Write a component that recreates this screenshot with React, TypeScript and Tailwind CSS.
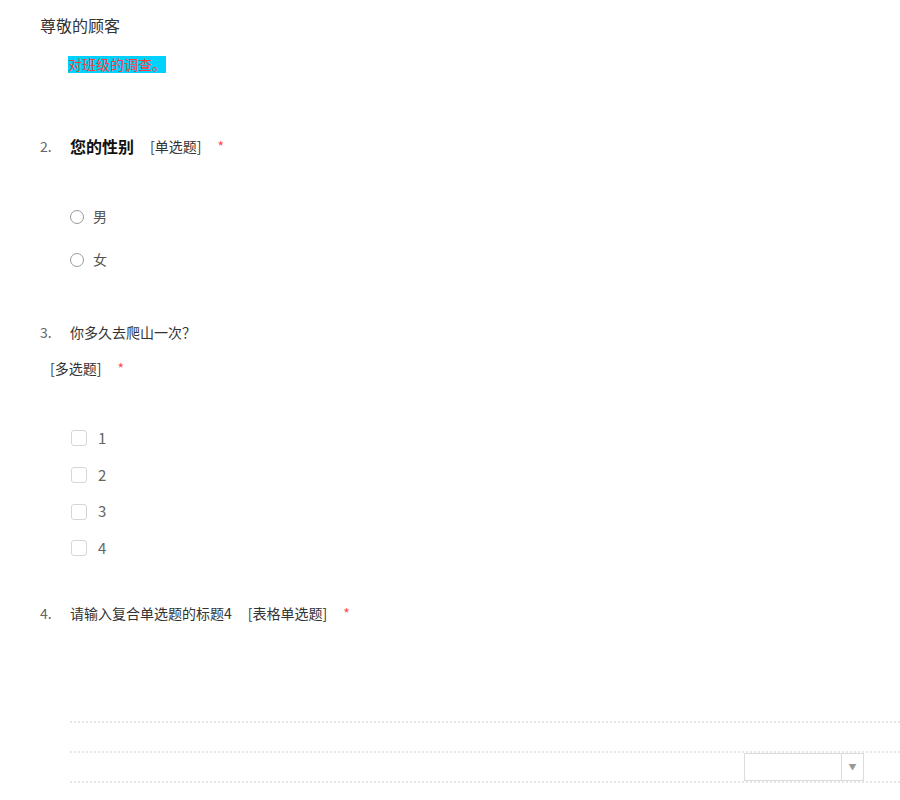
import React from 'react';

const font = { fontFamily: '"Noto Sans CJK SC", "Liberation Sans", sans-serif' };

const Star = () => <span className="text-[#ff4d4f] text-[14px] ml-[16px]">*</span>;

export default function App() {
  return (
    <div className="w-[900px] h-[800px] overflow-hidden bg-white pl-[40px] pt-[15px]" style={font}>
      <div className="text-[16px] leading-[20px] text-[#333]">尊敬的顾客</div>

      <div className="mt-[21px] pl-[28px] flex">
        <span className="bg-[#00d2ff] text-[#ff3b3b] text-[14px] leading-[17px]">对班级的调查。</span>
      </div>

      {/* Q2 */}
      <div className="mt-[61px] flex items-center h-[24px]">
        <span className="w-[30px] text-[14px] text-[#666]">2.</span>
        <span className="text-[16px] font-bold text-[#111]">您的性别</span>
        <span className="ml-[16px] text-[14px] text-[#333]">[单选题]</span>
        <Star />
      </div>
      <div className="mt-[37px] pl-[30px]">
        {['男', '女'].map((o) => (
          <div key={o} className="h-[43px] flex items-center">
            <span className="w-[14px] h-[14px] rounded-full border border-[#999] bg-white" />
            <span className="ml-[9px] text-[14px] text-[#555]">{o}</span>
          </div>
        ))}
      </div>

      {/* Q3 */}
      <div className="mt-[41px] flex items-center h-[20px]">
        <span className="w-[30px] text-[14px] text-[#666]">3.</span>
        <span className="text-[14px] text-[#333]">你多久去爬山一次？</span>
      </div>
      <div className="mt-[16px] pl-[10px] flex items-center h-[20px]">
        <span className="text-[14px] text-[#333]">[多选题]</span>
        <Star />
      </div>
      <div className="mt-[42px] pl-[31px]">
        {['1', '2', '3', '4'].map((o) => (
          <div key={o} className="h-[36.7px] flex items-center">
            <span className="w-[16px] h-[16px] rounded-[3px] border border-[#d6d6d6] bg-white" />
            <span className="ml-[11px] text-[15px] text-[#666]">{o}</span>
          </div>
        ))}
      </div>

      {/* Q4 */}
      <div className="mt-[37px] flex items-center h-[20px]">
        <span className="w-[30px] text-[14px] text-[#666]">4.</span>
        <span className="text-[14px] text-[#333]">请输入复合单选题的标题4</span>
        <span className="ml-[16px] text-[14px] text-[#333]">[表格单选题]</span>
        <Star />
      </div>

      <div className="mt-[97px] ml-[30px]">
        <div className="h-[30px] border-t-2 border-dotted border-[#e6e6e6]" />
        <div className="h-[30px] border-t-2 border-dotted border-[#e6e6e6] pl-[674px] flex items-start">
          <div className="w-[120px] h-[28px] border border-[#dcdcdc] bg-white flex">
            <div className="flex-1" />
            <div className="w-[22px] border-l border-[#dcdcdc] flex items-center justify-center">
              <span className="text-[8px] text-[#999]">▼</span>
            </div>
          </div>
        </div>
        <div className="h-[30px] border-t-2 border-dotted border-[#e6e6e6]" />
      </div>
    </div>
  );
}
